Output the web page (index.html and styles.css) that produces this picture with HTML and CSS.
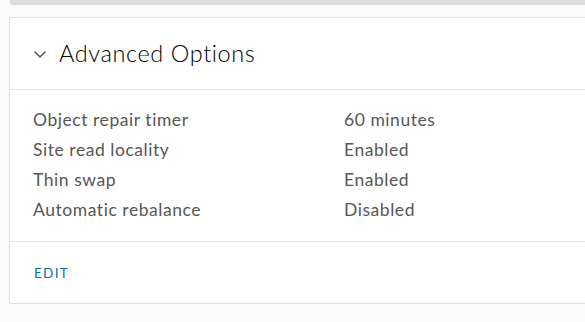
FILE: index.html
```html
<!DOCTYPE html>
<html lang="en">
<head>
<meta charset="UTF-8" />
<title>Advanced Options</title>
<link rel="stylesheet" href="styles.css">
</head>
<body>
  <div class="prev-card"></div>

  <div class="card">
    <div class="card-header">
      <svg class="chevron" width="14" height="14" viewBox="0 0 14 14">
        <path d="M1.5 4.5 L7 10 L12.5 4.5" fill="none" stroke="#565656" stroke-width="1.5" />
      </svg>
      <h2>Advanced Options</h2>
    </div>

    <div class="card-body">
      <div class="row"><span class="label">Object repair timer</span><span class="value">60 minutes</span></div>
      <div class="row"><span class="label">Site read locality</span><span class="value">Enabled</span></div>
      <div class="row"><span class="label">Thin swap</span><span class="value">Enabled</span></div>
      <div class="row"><span class="label">Automatic rebalance</span><span class="value">Disabled</span></div>
    </div>

    <div class="card-footer">
      <a href="#" class="edit">EDIT</a>
    </div>
  </div>

  <div class="next-line"></div>
</body>
</html>
```

FILE: styles.css
```css
body {
  margin: 0;
  background: #fafafa;
  font-family: Lato, 'Noto Sans', sans-serif;
  color: #565656;
  overflow: hidden;
  height: 322px;
}

.prev-card {
  height: 5px;
  margin-left: 10px;
  background: #dddddd;
  border-bottom-left-radius: 3px;
}

.card {
  margin: 12px 0 0 9px;
  background: white;
  border: 1px solid #dddddd;
  border-right: none;
  border-radius: 3px 0 0 3px;
}

.card-header {
  display: flex;
  align-items: center;
  height: 71px;
  padding-left: 23px;
  border-bottom: 1px solid #e8e8e8;
}

.chevron {
  margin-right: 12px;
  margin-top: 1px;
}

h2 {
  margin: 0 0 1px;
  font-size: 23.5px;
  font-weight: 300;
  letter-spacing: 0.6px;
  color: #000;
}

.card-body {
  padding: 14px 0 17px 23px;
  border-bottom: 1px solid #e8e8e8;
}

.row {
  display: flex;
  height: 30px;
  align-items: center;
  font-size: 17.5px;
  letter-spacing: 0.55px;
}

.label {
  width: 311px;
}

.card-footer {
  height: 61px;
  display: flex;
  align-items: center;
  padding-left: 24px;
}

.edit {
  color: #0072a3;
  text-decoration: none;
  font-size: 13.5px;
  letter-spacing: 1.3px;
}

.next-line {
  margin-top: 18px;
  border-top: 1px solid #e0e0e0;
}
```
